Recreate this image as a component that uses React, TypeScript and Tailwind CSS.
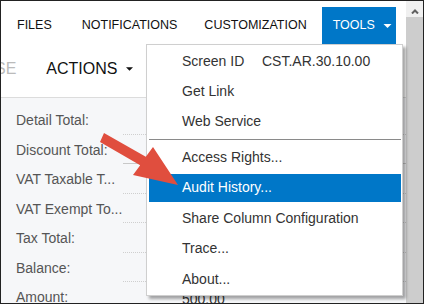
const rows = [
  { label: 'Detail Total:', value: '', solid: false },
  { label: 'Discount Total:', value: '', solid: true },
  { label: 'VAT Taxable T...', value: '', solid: false },
  { label: 'VAT Exempt To...', value: '', solid: false },
  { label: 'Tax Total:', value: '', solid: false },
  { label: 'Balance:', value: '', solid: false },
  { label: 'Amount:', value: '500.00', solid: false },
];

function Caret({ className }: { className?: string }) {
  return (
    <svg viewBox="0 0 8 4" className={className}>
      <polygon points="0,0 8,0 4,4" fill="currentColor" />
    </svg>
  );
}

function MenuItem({ children, active }: { children: React.ReactNode; active?: boolean }) {
  return (
    <div
      className={`flex h-[28px] items-center pl-[33px] text-[14px] ${
        active ? 'bg-[#0077c8] text-white' : 'text-[#333]'
      }`}
    >
      {children}
    </div>
  );
}

export default function App() {
  return (
    <div className="relative flex h-[304px] w-[424px] overflow-hidden border border-[#222] bg-white font-['Liberation_Sans',Arial,sans-serif]">
      <div className="flex min-w-0 flex-1 flex-col">
        {/* top tabs */}
        <div className="flex h-[43px] shrink-0 items-end text-[12.5px] text-[#111]">
          <span className="mb-[9px] ml-[16px]">FILES</span>
          <span className="mb-[9px] ml-[30px]">NOTIFICATIONS</span>
          <span className="mb-[9px] ml-[27px]">CUSTOMIZATION</span>
          <div className="ml-[15px] flex h-[37px] items-center bg-[#0077c8] pl-[11px] pr-[4px] text-white">
            <span>TOOLS</span>
            <Caret className="ml-[8px] h-[4px] w-[9px]" />
          </div>
        </div>

        {/* toolbar */}
        <div className="flex h-[54px] shrink-0 items-center border-b border-[#dcdcdc] pb-[3px] text-[16px]">
          <span className="-ml-[6px] text-[#bbb]">SE</span>
          <span className="ml-[30px] text-[#111]">ACTIONS</span>
          <Caret className="ml-[9px] h-[4px] w-[7px] text-[#111]" />
        </div>

        {/* form */}
        <div className="flex flex-1 flex-col bg-[#f6f7f9] pl-[15px] pt-[8px]">
          {rows.map((r) => (
            <div key={r.label} className="flex h-[29.5px] shrink-0 items-center text-[14px]">
              <span className="w-[107px] text-[#555]">{r.label}</span>
              <div className="flex h-full flex-1 items-end pb-[1px]">
                <div
                  className={`flex h-[24px] w-full items-end border-b pb-[1px] pl-[59px] text-[#333] ${
                    r.solid ? 'border-solid border-[#c8c8c8]' : 'border-dotted border-[#cfcfcf]'
                  }`}
                >
                  {r.value}
                </div>
              </div>
            </div>
          ))}
        </div>
      </div>

      {/* scrollbar */}
      <div className="flex w-[17px] shrink-0 flex-col bg-[#cdcdcd]">
        <div className="flex h-[16px] items-center justify-center bg-[#f0f0f0]">
          <svg viewBox="0 0 8 5" className="mt-[4px] h-[5px] w-[8px]">
            <polyline points="1,4.5 4,1.5 7,4.5" fill="none" stroke="#606060" strokeWidth="2" />
          </svg>
        </div>
      </div>

      {/* tools menu */}
      <div className="absolute left-[145px] top-[43px] flex h-[252px] w-[257px] flex-col gap-[2.4px] border border-[#cfcfcf] bg-white pl-[2px] pr-[1px] pt-[2px] shadow-[3px_3px_3px_rgba(0,0,0,0.35)]">
        <MenuItem>
          <span className="w-[80px]">Screen ID</span>
          <span>CST.AR.30.10.00</span>
        </MenuItem>
        <MenuItem>Get Link</MenuItem>
        <MenuItem>Web Service</MenuItem>
        <div className="my-[1px] h-px shrink-0 bg-[#8a8a8a]" />
        <MenuItem>Access Rights...</MenuItem>
        <MenuItem active>Audit History...</MenuItem>
        <MenuItem>Share Column Configuration</MenuItem>
        <MenuItem>Trace...</MenuItem>
        <MenuItem>About...</MenuItem>
      </div>

      {/* callout arrow */}
      <svg className="pointer-events-none absolute left-[-1px] top-[-1px] h-[304px] w-[424px]" viewBox="0 0 424 304">
        <polygon
          points="104,133 145.8,156.8 153,147 178,185 133,175 140.2,165.2 100,142"
          fill="#e04e3e"
        />
      </svg>
    </div>
  );
}
